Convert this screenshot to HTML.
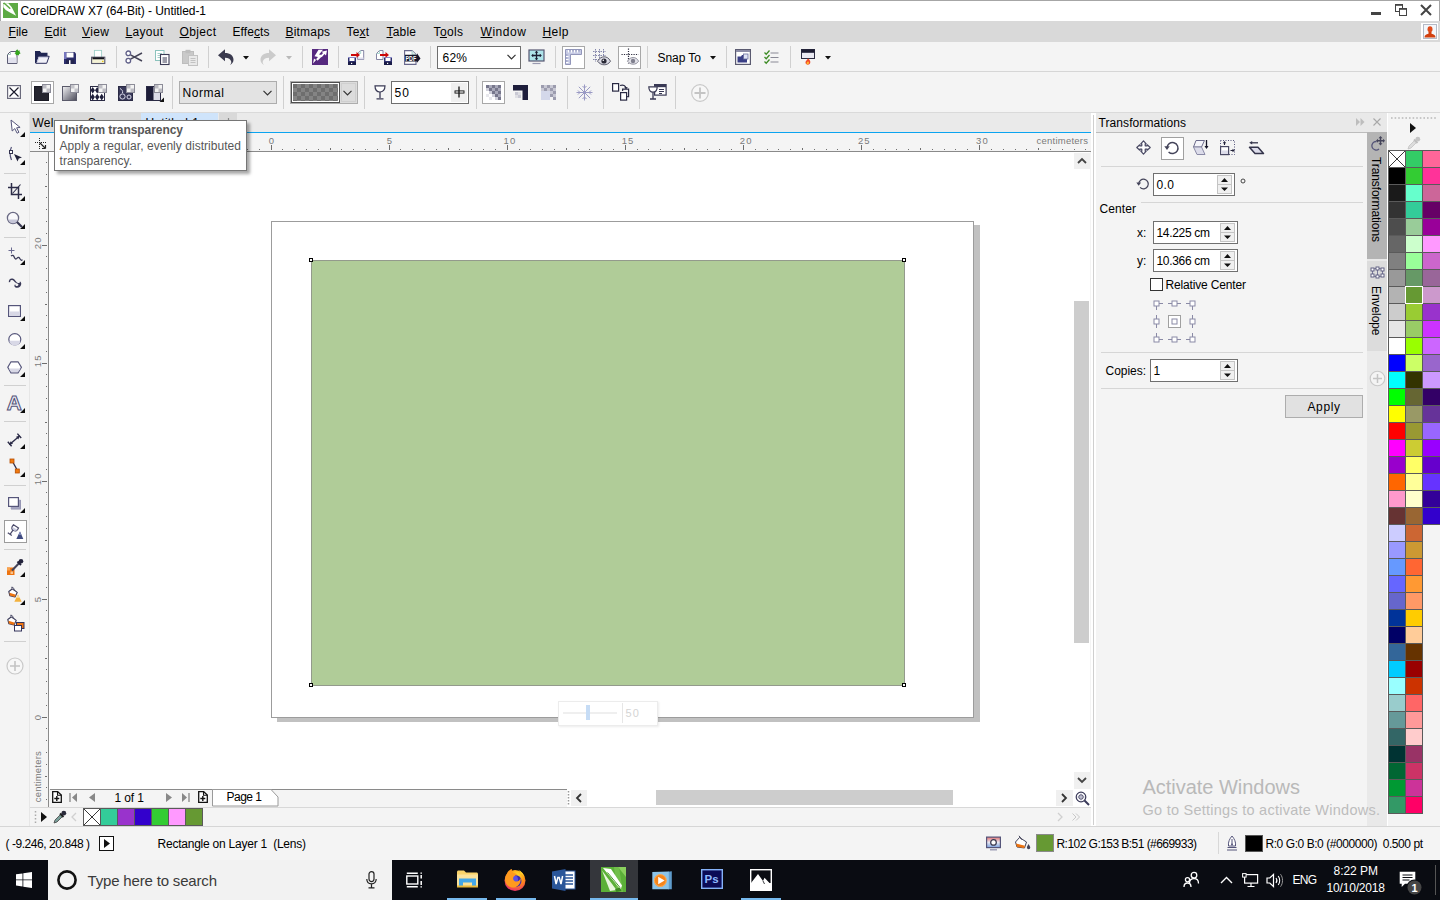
<!DOCTYPE html>
<html><head><meta charset="utf-8"><title>CorelDRAW X7 (64-Bit) - Untitled-1</title>
<style>
*{box-sizing:border-box;margin:0;padding:0}
html,body{width:1440px;height:900px;overflow:hidden;background:#f4f4f4;font-family:"Liberation Sans",sans-serif;font-size:12px;color:#000}
.a{position:absolute}
.t{position:absolute;white-space:pre;color:#000}
svg{position:absolute;overflow:visible}
.sep{position:absolute;width:1px;background:#d0d0d0}
.hl{position:absolute;height:1px;background:#d4d4d4}
.inp{position:absolute;background:#fff;border:1px solid #707070}
.spin{position:absolute;width:15px;background:#f0f0f0;border:1px solid #c4c4c4}
.sw{position:absolute;width:17px;height:17px;border:1px solid #5a5a5a;border-width:0 1px 1px 0}
u{text-decoration:underline;text-underline-offset:1px}
</style></head><body>
<!-- ===== frame regions ===== -->
<div class="a" style="left:0;top:0;width:1440px;height:21px;background:#fff;border:1px solid #a6a6a6;border-bottom:0"></div>
<div class="a" style="left:0;top:21px;width:1440px;height:21px;background:#d9d9d9"></div>
<div class="a" style="left:0;top:42px;width:1440px;height:29px;background:#f4f4f4"></div>
<div class="a" style="left:0;top:71px;width:1440px;height:1px;background:#d6d6d6"></div>
<div class="a" style="left:0;top:72px;width:1440px;height:40px;background:#f4f4f4"></div>
<div class="a" style="left:0;top:112px;width:1440px;height:1px;background:#dadada"></div>
<!-- toolbox -->
<div class="a" style="left:0;top:113px;width:30px;height:714px;background:#f4f4f4"></div>
<div class="a" style="left:29px;top:113px;width:1px;height:714px;background:#e6e6e6"></div>
<!-- tab bar -->
<div class="a" style="left:30px;top:113px;width:1061px;height:19px;background:#eaeaea"></div>
<div class="a" style="left:30px;top:113px;width:111px;height:19px;background:#d9d9d9"></div>
<div class="a" style="left:141px;top:113px;width:77px;height:19px;background:#cfe4fb"></div>
<div class="a" style="left:219px;top:113px;width:18px;height:19px;background:#d9d9d9"></div>
<div class="a" style="left:30px;top:132px;width:1061px;height:1px;background:#0ba4f0"></div>
<!-- canvas white -->
<div class="a" style="left:49px;top:152px;width:1041px;height:637px;background:#fff"></div>
<!-- rulers -->
<div class="a" style="left:30px;top:133px;width:1061px;height:19px;background:#f4f4f4;border-bottom:1px solid #8a8a8a"></div>
<div class="a" style="left:30px;top:152px;width:19px;height:655px;background:#f4f4f4;border-right:1px solid #8a8a8a"></div>
<div class="a" style="left:30px;top:133px;width:18px;height:18px;background:#f4f4f4"></div>
<!-- ===== title bar ===== -->
<svg style="left:3px;top:3px" width="15" height="15" viewBox="0 0 15 15"><rect width="15" height="15" fill="#5daa44"/><path d="M.3 4.300V1.200L1.200 .3H5.300L8.600 4l4.500 8.800L6.500 9.300Q1.800 7 .3 4.300z" fill="#fff"/><path d="M1.200 .2L6.800 5.200" stroke="#5daa44" stroke-width="1.500" stroke-linecap="round"/></svg>
<span class="t" style="left:20.5px;top:5.00px;font-size:12px;line-height:12px;letter-spacing:-0.064px;">CorelDRAW X7 (64-Bit) - Untitled-1</span>
<div class="a" style="left:1371px;top:12px;width:10px;height:3px;background:#444"></div>
<svg style="left:1395px;top:4px" width="12" height="12" viewBox="0 0 12 12"><rect x=".5" y="1" width="7" height="6.500" fill="#fff" stroke="#444" stroke-width="1"/><path d="M0 .8h8" stroke="#444" stroke-width="1.600"/><rect x="4.500" y="5" width="7" height="6.500" fill="#fff" stroke="#444" stroke-width="1"/><path d="M4 4.800h8" stroke="#444" stroke-width="1.600"/></svg>
<svg style="left:1420px;top:5px" width="12" height="10" viewBox="0 0 12 10"><path d="M1 0l10 10M11 0L1 10" stroke="#444" stroke-width="2"/></svg>
<!-- ===== menu bar ===== -->
<span class="t" style="left:8.5px;top:26.00px;font-size:12px;line-height:12px;letter-spacing:0.047px;"><u>F</u>ile</span>
<span class="t" style="left:44.5px;top:26.00px;font-size:12px;line-height:12px;letter-spacing:0.266px;"><u>E</u>dit</span>
<span class="t" style="left:82px;top:26.00px;font-size:12px;line-height:12px;letter-spacing:0.396px;"><u>V</u>iew</span>
<span class="t" style="left:125.5px;top:26.00px;font-size:12px;line-height:12px;letter-spacing:0.291px;"><u>L</u>ayout</span>
<span class="t" style="left:179.5px;top:26.00px;font-size:12px;line-height:12px;letter-spacing:0.359px;"><u>O</u>bject</span>
<span class="t" style="left:232.5px;top:26.00px;font-size:12px;line-height:12px;letter-spacing:0.086px;">Effe<u>c</u>ts</span>
<span class="t" style="left:285.5px;top:26.00px;font-size:12px;line-height:12px;letter-spacing:0.190px;"><u>B</u>itmaps</span>
<span class="t" style="left:346.5px;top:26.00px;font-size:12px;line-height:12px;letter-spacing:0.156px;">Te<u>x</u>t</span>
<span class="t" style="left:386.5px;top:26.00px;font-size:12px;line-height:12px;letter-spacing:0.203px;"><u>T</u>able</span>
<span class="t" style="left:433.5px;top:26.00px;font-size:12px;line-height:12px;letter-spacing:0.367px;">T<u>o</u>ols</span>
<span class="t" style="left:480.5px;top:26.00px;font-size:12px;line-height:12px;letter-spacing:0.562px;"><u>W</u>indow</span>
<span class="t" style="left:542.5px;top:26.00px;font-size:12px;line-height:12px;letter-spacing:0.438px;"><u>H</u>elp</span>
<div class="a" style="left:1421px;top:23px;width:17px;height:17px;background:#fff"></div><svg style="left:1423px;top:24px" width="14" height="15" viewBox="0 0 14 15"><rect x=".5" y=".5" width="13" height="14" fill="#f4f6fa" stroke="#b4bac6"/><ellipse cx="7" cy="5.300" rx="2.500" ry="3" fill="#e04a1a"/><path d="M1.500 13.500c0-2.500 1.500-3.300 4-3.800V8h3v1.700c2.500.5 4 1.300 4 3.800z" fill="#d2400f"/></svg>
<!-- ===== standard toolbar (y 42-71, cy 57) ===== -->
<!-- new -->
<svg style="left:7px;top:49px" width="15" height="15" viewBox="0 0 15 15"><path d="M3.500 2.500L.5 5.500V14.500h9.500V2.500z" fill="#fff" stroke="#5c5c74"/><path d="M1 8.500h8.500v5.500H1z" fill="#e1e1ed"/><path d="M3.500 2.500v3h-3" fill="none" stroke="#9fbdb8" stroke-width=".9"/><path d="M10.300 .3l.9 1.500 1.700-.4-.5 1.700 1.300 1.200-1.700.6-.1 1.700-1.500-.9-1.500.9 0-1.800L7.300 4.200l1.700-.6-.2-1.800z" fill="#2f9a1a"/><circle cx="10.400" cy="4" r="2.100" fill="#37a81f"/></svg>
<!-- open -->
<svg style="left:35px;top:50px" width="15" height="14" viewBox="0 0 15 14"><path d="M.6 13V1.600h4l1.300 1.800h6V6" fill="#1f2552" stroke="#1f2552" stroke-width="1.200"/><path d="M.8 13.300L3.300 6.300h10.900l-2.500 7z" fill="#f1f1f8" stroke="#2a2c5a" stroke-width="1"/><path d="M2.200 12.300l1.800-5h9" stroke="#c9cbe2" fill="none"/></svg>
<!-- save -->
<svg style="left:64px;top:52px" width="12" height="12" viewBox="0 0 12 12"><path d="M0 0h10.500L12 1.500V12H0z" fill="#2c2e6c"/><path d="M0 0h2.500v7H0z" fill="#7676be"/><rect x="2.500" y=".5" width="7" height="5" fill="#fff"/><rect x="2" y="7.500" width="8.500" height="4.500" fill="#23244f"/><rect x="5" y="8.200" width="1.500" height="3.800" fill="#fff"/></svg>
<!-- print -->
<svg style="left:91px;top:50px" width="15" height="14" viewBox="0 0 15 14"><rect x="3.400" y=".4" width="7.200" height="7.500" fill="#fff" stroke="#9fcfc8" stroke-width=".9"/><rect x=".6" y="7.200" width="13.200" height="6.300" fill="#f4f2d6" stroke="#55556a" stroke-width="1.100"/><rect x="1.500" y="7.300" width="11.500" height="2" fill="#15151f"/><rect x="11" y="10.800" width="1.500" height="1.200" fill="#e9c614"/></svg>
<div class="sep" style="left:116px;top:46px;height:22px"></div>
<!-- cut -->
<svg style="left:125px;top:50px" width="18" height="14" viewBox="0 0 18 14"><path d="M5.500 4.800L17 11M5.500 9.200L17 3" stroke="#444357" stroke-width="1.500"/><circle cx="3.300" cy="3.300" r="2.300" fill="#fff" stroke="#5f5f88" stroke-width="1.300"/><circle cx="3.300" cy="10.700" r="2.300" fill="#fff" stroke="#5f5f88" stroke-width="1.300"/></svg>
<!-- copy -->
<svg style="left:155px;top:50px" width="15" height="15" viewBox="0 0 15 15"><rect x=".5" y=".5" width="8.500" height="10" fill="#fff" stroke="#8cc3bd"/><path d="M2.500 3.500h4.500M2.500 5.500h4.500M2.500 7.500h2.500" stroke="#a6d0cb"/><rect x="5.500" y="4.500" width="8.500" height="10" fill="#fff" stroke="#3b3b55" stroke-width="1.100"/><path d="M7.500 8h4.500M7.500 10h4.500M7.500 12h4.500" stroke="#3b3b55"/></svg>
<!-- paste (disabled) -->
<svg style="left:182px;top:49px" width="16" height="17" viewBox="0 0 16 17"><rect x=".5" y="2.500" width="11" height="12" fill="#c9c9c9" stroke="#bdbdbd"/><rect x="3.500" y=".8" width="5" height="3.400" fill="#bdbdbd"/><rect x="6.500" y="6.500" width="9" height="10" fill="#e9e9e9" stroke="#c2c2c2"/><path d="M8.500 9.500h5M8.500 11.500h5M8.500 13.500h5" stroke="#c2c2c2"/></svg>
<div class="sep" style="left:208px;top:46px;height:22px"></div>
<!-- undo -->
<svg style="left:217px;top:48px" width="18" height="18" viewBox="0 0 18 18"><path d="M1 7.200L8 1.200V5c5 0 8.500 2.500 8.500 6.800 0 2.300-1.400 4.200-3.400 5.200 1-1.200 1.300-2.300 1.100-3.500C13.700 11 11.500 9.800 8 9.700v3.600z" fill="#3a3a4e"/></svg>
<svg style="left:242.500px;top:56px" width="6" height="3.500" viewBox="0 0 6 3.500"><path d="M0 0h6L3 3.500z" fill="#111"/></svg>
<!-- redo disabled -->
<svg style="left:259px;top:48px" width="18" height="18" viewBox="0 0 18 18"><path d="M17 7.200L10 1.200V5C5 5 1.500 7.500 1.500 11.800c0 2.300 1.400 4.200 3.400 5.200-1-1.200-1.300-2.300-1.100-3.500C4.300 11 6.500 9.800 10 9.700v3.600z" fill="#cbcbcb"/></svg>
<svg style="left:285.500px;top:56px" width="6" height="3.500" viewBox="0 0 6 3.500"><path d="M0 0h6L3 3.500z" fill="#b9b9b9"/></svg>
<div class="sep" style="left:302px;top:46px;height:22px"></div>
<!-- purple search/connect icon -->
<svg style="left:312px;top:49px" width="16" height="16" viewBox="0 0 16 16"><rect width="16" height="16" fill="#56297f"/><path d="M6.500 .8h4.500L7 5.500l4 .8-5.500 5.500-.8-1.600L1 14.500l1-5 1.600 1.300L6 8 2.500 7.200z" fill="#fff"/><path d="M15 1.500l-1 5-1.500-1.400-2.800 3.200-1.800-1 3.200-3.300-1.600-1.300z" fill="#fff"/></svg>
<div class="sep" style="left:338px;top:46px;height:22px"></div>
<!-- import -->
<svg style="left:348px;top:50px" width="16" height="15" viewBox="0 0 16 15"><path d="M9.700 3.500L12.700 .5h3v9h-6z" fill="#fff" stroke="#77779a" stroke-width=".9"/><path d="M12.700 .5v3h-3" fill="none" stroke="#9fd0c8" stroke-width=".9"/><path d="M10 7.500h5.500v1.800H10z" fill="#dedeed"/><rect x="0" y="7" width="8" height="8" fill="#2c2e6c"/><rect x="0" y="7" width="8" height="1" fill="#8a8ac8"/><rect x="1.5" y="8" width="5" height="3" fill="#fff"/><rect x="0" y="12" width="8" height="3" fill="#1a1c48"/><rect x="3" y="12.8" width="1.200" height="1.200" fill="#fff"/><path d="M3 4h5.500V2l3.500 2.900-3.500 2.900V5.900H3z" fill="#cc0808"/></svg>
<!-- export -->
<svg style="left:376px;top:50px" width="16" height="15" viewBox="0 0 16 15"><path d="M.5 3.500L3.500 .5h3.500v9H.5z" fill="#fff" stroke="#77779a" stroke-width=".9"/><path d="M3.500 .5v3h-3" fill="none" stroke="#9fd0c8" stroke-width=".9"/><rect x="8" y="7" width="8" height="8" fill="#2c2e6c"/><rect x="8" y="7" width="8" height="1" fill="#8a8ac8"/><rect x="9.5" y="8" width="5" height="3" fill="#fff"/><rect x="8" y="12" width="8" height="3" fill="#1a1c48"/><rect x="11" y="12.8" width="1.200" height="1.200" fill="#fff"/><path d="M4 4h5.500V2l3.500 2.900-3.500 2.900V5.900H4z" fill="#cc0808"/></svg>
<!-- pdf -->
<svg style="left:404px;top:50px" width="17" height="15" viewBox="0 0 17 15"><path d="M.6 .6H8l4 4v9.800H.6z" fill="#fff" stroke="#66668a" stroke-width="1.100"/><path d="M8 .6v4h4" fill="#d8ece8" stroke="#9fc8c0" stroke-width=".8"/><path d="M1 4.800h12V3.300l3.500 5.200L13 12.800V11.500H1z" fill="#16162a"/><text x="1.600" y="10.600" font-family="Liberation Sans" font-weight="bold" font-size="6.300" fill="#fff" textLength="10.500" lengthAdjust="spacingAndGlyphs">PDF</text></svg>
<div class="sep" style="left:430px;top:46px;height:22px"></div>
<!-- zoom combo -->
<div class="inp" style="left:437px;top:46px;width:84px;height:23px;border-color:#6f6f6f"></div>
<span class="t" style="left:442.5px;top:52.00px;font-size:12px;line-height:12px;letter-spacing:0.234px;">62%</span>
<svg style="left:507px;top:54px" width="9" height="6" viewBox="0 0 9 6"><path d="M.5 .8l4 4 4-4" fill="none" stroke="#333" stroke-width="1.200"/></svg>
<!-- full page -->
<svg style="left:528px;top:49px" width="17" height="16" viewBox="0 0 17 16"><rect x="1" y="1" width="15" height="11" fill="#aee4ea" stroke="#555570" stroke-width="1.200"/><path d="M8.500 2.500v8M4 6.500h9" stroke="#1d1d33" stroke-width="1.300"/><path d="M8.500 1.800l1.800 2h-3.600zM8.500 11.200l1.800-2h-3.600zM3.200 6.500l2-1.800v3.600zM13.800 6.500l-2-1.800v3.600z" fill="#1d1d33"/><path d="M4.500 14.500h8" stroke="#9a9ab0" stroke-width="1.200"/></svg>
<div class="sep" style="left:555px;top:46px;height:22px"></div>
<!-- rulers (toggled) -->
<div class="a" style="left:562px;top:46px;width:23px;height:23px;background:#fff;border:1px solid #a8a8a8"></div>
<svg style="left:565px;top:49px" width="17" height="16" viewBox="0 0 17 16"><path d="M.5 .5h16v5H5.500v10H.5z" fill="#c6cae4" stroke="#9296ba"/><path d="M3.500 1v2.500M6.500 1v2.500M9.500 1v2.500M12.500 1v2.500M1 7.500h2.500M1 10.500h2.500M1 13.500h2.500" stroke="#fff" stroke-width="1.200"/><path d="M5 1v1.500M8 1v1.500M11 1v1.500M14 1v1.500M1 6h1.500M1 9h1.500M1 12h1.500" stroke="#7a7ea6" stroke-width=".8"/></svg>
<!-- grid eye -->
<svg style="left:592px;top:48px" width="19" height="18" viewBox="0 0 19 18"><path d="M1 3.500h13M1 7.500h13M1 11.500h6M3.500 1v13M7.500 1v10M11.500 1v7" stroke="#8486ab" stroke-width="1" stroke-dasharray="1.500 1"/><path d="M5.500 13.200c2-3.300 4.500-4.400 6.700-4.400s4.700 1.100 6.300 4.400c-1.600 2.600-4 3.600-6.300 3.600s-4.700-1-6.700-3.600z" fill="#dcdce6" stroke="#3a3a4a" stroke-width=".8"/><circle cx="12" cy="13" r="2.600" fill="#2a2a36"/><circle cx="11.300" cy="12.200" r=".8" fill="#fff"/></svg>
<!-- guides eye (toggled) -->
<div class="a" style="left:618px;top:46px;width:23px;height:23px;background:#fff;border:1px solid #a8a8a8"></div>
<svg style="left:621px;top:48px" width="19" height="18" viewBox="0 0 19 18"><path d="M7.500 .5v15M.5 6.500h17" stroke="#2a2a3c" stroke-width="1.200" stroke-dasharray="1.200 1.200"/><path d="M6.500 13.200c1.700-2.800 3.800-3.700 5.700-3.700s4 .9 5.400 3.700c-1.400 2.200-3.400 3-5.400 3s-4-.8-5.700-3z" fill="#e3e3ea" stroke="#7a7a88" stroke-width=".8"/><circle cx="12" cy="13" r="2.200" fill="#80808e"/></svg>
<div class="sep" style="left:647px;top:46px;height:22px"></div>
<span class="t" style="left:657.5px;top:52.00px;font-size:12px;line-height:12px;letter-spacing:-0.055px;">Snap To</span>
<svg style="left:709.500px;top:56px" width="6" height="3.500" viewBox="0 0 6 3.500"><path d="M0 0h6L3 3.500z" fill="#111"/></svg>
<div class="sep" style="left:726px;top:46px;height:22px"></div>
<!-- options -->
<svg style="left:735px;top:49px" width="16" height="16" viewBox="0 0 16 16"><rect x=".6" y=".6" width="14.800" height="14.800" fill="#fff" stroke="#5a5a70" stroke-width="1.200"/><rect x="1" y="1" width="14" height="2" fill="#8c8ca6"/><path d="M2.500 13.500V7.500h3.500l1-1.500h5v7.500z" fill="#3a3f86"/><rect x="8.500" y="5" width="4.500" height="5" fill="#dfe3f5" stroke="#6a6f9c" stroke-width=".8"/></svg>
<!-- checklist -->
<svg style="left:763px;top:49px" width="17" height="17" viewBox="0 0 17 17"><path d="M7.500 4h8M7.500 8.500h8M7.500 13h8" stroke="#8a8a96" stroke-width="1.100"/><path d="M1.500 3.500l1.700 1.700L6.500 1.500M1.500 8l1.700 1.700L6.500 6M1.500 12.500l1.700 1.700 3.300-3.700" fill="none" stroke="#3d8b24" stroke-width="1.300"/></svg>
<div class="sep" style="left:790px;top:46px;height:22px"></div>
<!-- app launcher -->
<svg style="left:801px;top:49px" width="14" height="17" viewBox="0 0 14 17"><rect x=".5" y=".5" width="13" height="9" fill="#e9e9f2" stroke="#2a2a40" stroke-width="1"/><rect x=".5" y=".5" width="13" height="3.300" fill="#1d1d33"/><path d="M7 9.500c2 1.400 2.700 2.900 2.200 4.500-.4 1.100-1.300 1.700-2.300 1.700-1.400 0-2.400-.9-2.400-2.200 0-1.300 1.200-2 2.500-4z" fill="#f0482a"/><path d="M7 12.300c.9.700 1.200 1.500.9 2.300-.2.500-.7.800-1.200.8-.7 0-1.200-.5-1.200-1.100 0-.7.800-1.100 1.500-2z" fill="#ffb62e"/></svg>
<svg style="left:824.500px;top:56px" width="6" height="3.500" viewBox="0 0 6 3.500"><path d="M0 0h6L3 3.500z" fill="#111"/></svg>
<!-- ===== property bar (y 72-111, cy 92) ===== -->

<!-- no transparency -->
<svg style="left:7px;top:85px" width="14" height="14" viewBox="0 0 14 14"><rect x=".6" y=".6" width="12.800" height="12.800" fill="#fff" stroke="#6a6a7c" stroke-width="1.200"/><path d="M2.500 2.500l9 9M11.500 2.500l-9 9" stroke="#1c1c2c" stroke-width="1.200"/></svg>
<!-- uniform (selected) -->
<div class="a" style="left:31px;top:81px;width:23px;height:23px;background:#fff;border:1px solid #a8a8a8"></div>
<svg style="left:34px;top:84px" width="17" height="17" viewBox="0 0 17 17"><rect x=".5" y="2.500" width="14" height="14" fill="#24242e" stroke="#1a1a24"/><rect x="8.500" y=".5" width="8" height="8" fill="#f2f2f2" stroke="#8c8c98"/><rect x="9" y="1" width="3.500" height="3.500" fill="#bdbdc4"/><rect x="12.500" y="4.500" width="3.500" height="3.500" fill="#bdbdc4"/></svg>
<!-- fountain -->
<svg style="left:62px;top:84px" width="17" height="17" viewBox="0 0 17 17"><defs><linearGradient id="fg1" x1="0" y1="0" x2="1" y2="1"><stop offset="0" stop-color="#f4f4f6"/><stop offset="1" stop-color="#4a4a58"/></linearGradient></defs><rect x=".5" y="2.500" width="14" height="14" fill="url(#fg1)" stroke="#5a5a6a"/><rect x="8.500" y=".5" width="8" height="8" fill="#f2f2f2" stroke="#8c8c98"/><rect x="9" y="1" width="3.500" height="3.500" fill="#c4c4ca"/><rect x="12.500" y="4.500" width="3.500" height="3.500" fill="#c4c4ca"/></svg>
<!-- vector pattern -->
<svg style="left:90px;top:84px" width="17" height="17" viewBox="0 0 17 17"><rect x=".5" y="2.500" width="14" height="14" fill="#fff" stroke="#2a2a44"/><path d="M2.700 3l2.200 3.300-2.200 3.300L.5 6.300zM7.200 3l2.200 3.300-2.200 3.300L5 6.300zM2.700 9.800l2.200 3.300-2.200 3.300L.5 13.100zM7.200 9.800l2.200 3.300-2.200 3.300L5 13.100zM11.700 9.800l2.200 3.300-2.200 3.300-2.200-3.300z" fill="#20203c"/><rect x="8.500" y=".5" width="8" height="8" fill="#f2f2f2" stroke="#8c8c98"/><rect x="9" y="1" width="3.500" height="3.500" fill="#bdbdc4"/><rect x="12.500" y="4.500" width="3.500" height="3.500" fill="#bdbdc4"/></svg>
<!-- bitmap pattern -->
<svg style="left:118px;top:84px" width="17" height="17" viewBox="0 0 17 17"><rect x=".5" y="2.500" width="14" height="14" fill="#3a3a5a" stroke="#2a2a44"/><circle cx="4.500" cy="12.500" r="2.600" fill="none" stroke="#d8d8e8" stroke-width="1"/><circle cx="11" cy="13" r="2" fill="none" stroke="#d8d8e8" stroke-width="1"/><path d="M2 4.500c2 1 3 2.500 2.500 4.500" fill="none" stroke="#d8d8e8" stroke-width="1"/><rect x="8.500" y=".5" width="8" height="8" fill="#f2f2f2" stroke="#8c8c98"/><rect x="9" y="1" width="3.500" height="3.500" fill="#bdbdc4"/><rect x="12.500" y="4.500" width="3.500" height="3.500" fill="#bdbdc4"/></svg>
<!-- two-color pattern w/ flyout -->
<svg style="left:146px;top:84px" width="19" height="19" viewBox="0 0 19 19"><rect x=".5" y="2.500" width="14" height="14" fill="#dcdce8" stroke="#2a2a44"/><rect x="1" y="3" width="6.500" height="13" fill="#1c1c38"/><rect x="8.500" y=".5" width="8" height="8" fill="#f2f2f2" stroke="#8c8c98"/><rect x="9" y="1" width="3.500" height="3.500" fill="#bdbdc4"/><rect x="12.500" y="4.500" width="3.500" height="3.500" fill="#bdbdc4"/><path d="M18 13.500V18h-4.500z" fill="#111"/></svg>
<div class="sep" style="left:172px;top:76px;height:33px"></div>
<!-- Normal dropdown -->
<div class="a" style="left:179px;top:81px;width:98px;height:23px;background:#e3e3e3;border:1px solid #adadad"></div>
<span class="t" style="left:182.5px;top:87.00px;font-size:12px;line-height:12px;letter-spacing:0.566px;">Normal</span>
<svg style="left:263px;top:90px" width="9" height="6" viewBox="0 0 9 6"><path d="M.5 .8l4 4 4-4" fill="none" stroke="#333" stroke-width="1.200"/></svg>
<div class="sep" style="left:283px;top:76px;height:33px"></div>
<!-- transparency picker -->
<div class="a" style="left:290px;top:81px;width:68px;height:23px;background:#dcdcdc;border:1px solid #adadad"></div>
<svg style="left:291px;top:82px" width="49" height="21" viewBox="0 0 49 21"><defs><pattern id="chk" x="2" y="2" width="8" height="8" patternUnits="userSpaceOnUse"><rect width="8" height="8" fill="#848484"/><rect width="4" height="4" fill="#6e6e6e"/><rect x="4" y="4" width="4" height="4" fill="#6e6e6e"/></pattern></defs><rect x="0" y="0" width="49" height="21" fill="#4f4f4f"/><rect x="1" y="1" width="47" height="19" fill="#fff"/><rect x="2" y="2" width="45" height="17" fill="url(#chk)"/></svg>
<div class="a" style="left:341px;top:83px;width:15px;height:19px;background:#dcdcdc;border:1px solid #cfcfcf"></div>
<svg style="left:343px;top:90px" width="9" height="6" viewBox="0 0 9 6"><path d="M.5 .8l4 4 4-4" fill="none" stroke="#333" stroke-width="1.200"/></svg>
<div class="sep" style="left:364px;top:76px;height:33px"></div>
<!-- glass icon -->
<svg style="left:374px;top:85px" width="12" height="15" viewBox="0 0 12 15"><path d="M1 .8h10c0 4-2 6.200-5 6.200S1 4.800 1 .8z" fill="#fff" stroke="#3a3a55" stroke-width="1.200"/><path d="M6 7v6M2.500 13.800h7" stroke="#3a3a55" stroke-width="1.300"/></svg>
<!-- 50 input -->
<div class="inp" style="left:391px;top:81px;width:78px;height:23px;border-color:#6f6f6f"></div>
<span class="t" style="left:394.5px;top:87.00px;font-size:12px;line-height:12px;letter-spacing:1.141px;">50</span>
<div class="a" style="left:451px;top:83px;width:16px;height:19px;background:#f0f0f0"></div>
<svg style="left:454px;top:86px" width="11" height="12" viewBox="0 0 11 12"><rect x="1" y="4.900" width="9" height="2.200" fill="#f0f0f0" stroke="#111" stroke-width=".9"/><path d="M5 .5v11" stroke="#111" stroke-width="1.300"/></svg>
<div class="sep" style="left:476px;top:76px;height:33px"></div>
<!-- transparency target: all (selected) -->
<div class="a" style="left:482px;top:81px;width:23px;height:23px;background:#fff;border:1px solid #a8a8a8"></div>
<svg style="left:486px;top:85px" width="15" height="15" viewBox="0 0 15 15"><g fill="#77778c"><rect x="0" y="0" width="3" height="3"/><rect x="6" y="0" width="3" height="3"/><rect x="12" y="0" width="3" height="3"/><rect x="3" y="3" width="3" height="3"/><rect x="9" y="3" width="3" height="3"/><rect x="6" y="6" width="3" height="3"/><rect x="12" y="6" width="3" height="3"/><rect x="9" y="9" width="3" height="3"/><rect x="12" y="12" width="3" height="3"/></g><g fill="#a9a9ba"><rect x="3" y="0" width="3" height="3"/><rect x="9" y="0" width="3" height="3"/><rect x="6" y="3" width="3" height="3"/><rect x="12" y="3" width="3" height="3"/><rect x="9" y="6" width="3" height="3"/><rect x="12" y="9" width="3" height="3"/></g><g fill="#cfcfda"><rect x="0" y="3" width="3" height="3"/><rect x="3" y="6" width="3" height="3"/><rect x="6" y="9" width="3" height="3"/><rect x="9" y="12" width="3" height="3"/><rect x="0" y="9" width="3" height="3" opacity=".5"/><rect x="3" y="12" width="3" height="3" opacity=".5"/></g></svg>
<!-- fill only -->
<svg style="left:513px;top:85px" width="16" height="16" viewBox="0 0 16 16"><path d="M0 0h15v15h-5.500V5.500H0z" fill="#1e1e3c"/><g fill="#c9c9d4"><rect x="2" y="7" width="3" height="3"/><rect x="5" y="10" width="3" height="3"/><rect x="2" y="10" width="3" height="3" opacity=".5"/><rect x="5" y="7" width="3" height="3" opacity=".5"/></g></svg>
<!-- outline only -->
<svg style="left:541px;top:85px" width="16" height="16" viewBox="0 0 16 16"><g fill="#9c9cae"><rect x="0" y="0" width="3" height="3"/><rect x="6" y="0" width="3" height="3"/><rect x="12" y="0" width="3" height="3"/><rect x="3" y="3" width="3" height="3"/><rect x="9" y="3" width="3" height="3"/><rect x="12" y="6" width="3" height="3"/><rect x="9" y="9" width="3" height="3"/><rect x="12" y="12" width="3" height="3"/></g><g fill="#c8c8d4"><rect x="3" y="0" width="3" height="3"/><rect x="9" y="0" width="3" height="3"/><rect x="0" y="3" width="3" height="3"/><rect x="6" y="3" width="3" height="3"/><rect x="12" y="3" width="3" height="3"/><rect x="9" y="6" width="3" height="3"/><rect x="12" y="9" width="3" height="3"/></g><rect x="0" y="6" width="9" height="9" fill="#d4d8ea"/></svg>
<div class="sep" style="left:567px;top:76px;height:33px"></div>
<!-- freeze -->
<svg style="left:576px;top:84px" width="17" height="17" viewBox="0 0 17 17"><g stroke="#9a9ac4" stroke-width="1" fill="none"><path d="M8.500 .5v16M.5 8.500h16M2.800 2.800l11.400 11.400M14.200 2.800L2.800 14.200"/><path d="M6.500 2l2 2 2-2M6.500 15l2-2 2 2M2 6.500l2 2-2 2M15 6.500l-2 2 2 2"/></g></svg>
<div class="sep" style="left:603px;top:76px;height:33px"></div>
<!-- copy transparency -->
<svg style="left:612px;top:83px" width="18" height="19" viewBox="0 0 18 19"><rect x=".6" y=".6" width="6" height="7.500" fill="#fff" stroke="#2a2a44" stroke-width="1.200"/><rect x="8.600" y="9.600" width="6" height="7.500" fill="#fff" stroke="#2a2a44" stroke-width="1.200"/><path d="M10.600 8V6.200h6v7.500h-1.500" fill="none" stroke="#2a2a44" stroke-width="1.200"/><path d="M8 2.500c3.500-1 5.500 0 6 2.800" fill="none" stroke="#2a2a44" stroke-width="1.200"/><path d="M12.200 4.300l1.900 2 1.700-2.300z" fill="#2a2a44"/></svg>
<div class="sep" style="left:639px;top:76px;height:33px"></div>
<!-- edit transparency -->
<svg style="left:648px;top:84px" width="19" height="17" viewBox="0 0 19 17"><rect x="6.600" y=".6" width="11.500" height="10.500" fill="#fff" stroke="#3a3a55" stroke-width="1.200"/><rect x="7" y="1" width="11" height="2.200" fill="#3a3a55"/><path d="M11 5.500h5M11 7.500h5M11 9.500h3" stroke="#3a3a55" stroke-width="1"/><path d="M.8 2.800h8.400c0 3.500-1.700 5.400-4.200 5.400S.8 6.300.8 2.800z" fill="#fff" stroke="#3a3a55" stroke-width="1.200"/><path d="M5 8.200v6M2 15h6" stroke="#3a3a55" stroke-width="1.300"/></svg>
<div class="sep" style="left:675px;top:76px;height:33px"></div>
<!-- quick customize -->
<svg style="left:690px;top:82.500px" width="20" height="20" viewBox="0 0 20 20"><circle cx="10" cy="10" r="8.300" fill="#f7f7f7" stroke="#c9c9c9" stroke-width="1.200"/><path d="M10 4.500v11M4.500 10h11" stroke="#c4c4c4" stroke-width="1.800"/></svg>
<!-- ===== toolbox (x 0-29, cx 15) ===== -->
<svg style="left:0;top:0" width="30" height="700" viewBox="0 0 30 700"><path d="M25 132V137H20zM25 160V165H20zM25 196V201H20zM25 224V229H20zM25 260V265H20zM25 316V321H20zM25 344V349H20zM25 372V377H20zM25 408V413H20zM25 444V449H20zM25 472V477H20zM25 508V513H20zM25 572V577H20zM25 600V605H20z" fill="#0c0c0c"/></svg>
<!-- pick -->
<svg style="left:10px;top:119px" width="16" height="18" viewBox="0 0 16 18"><path d="M1 1l1.200 11 2.600-2.400 2.300 4.600 1.800-.9-2.300-4.500 3.500-.4z" fill="#fff" stroke="#55557a" stroke-width="1"/></svg>
<!-- shape -->
<svg style="left:8px;top:146px" width="18" height="18" viewBox="0 0 18 18"><path d="M3.500 1c-2 4-2 8 0 13" fill="none" stroke="#55557a" stroke-width="1.200"/><rect x="1.500" y="4.500" width="3" height="3" fill="#fff" stroke="#33334f"/><path d="M6 8l8 3.500-3.200 1-1.300 3z" fill="#22223a"/></svg>
<div class="hl" style="left:4px;top:173px;width:22px;background:#d0d0d0"></div>
<!-- crop -->
<svg style="left:8px;top:183px" width="14" height="16" viewBox="0 0 14 16"><path d="M3.500 0v11.500H14M0 4.500h10.500V16" fill="none" stroke="#2c2c48" stroke-width="1.500"/><path d="M12.500 1.500L4.500 10.500" stroke="#2c2c48" stroke-width="1.100"/></svg>
<!-- zoom -->
<svg style="left:6px;top:211px" width="20" height="19" viewBox="0 0 20 19"><circle cx="7" cy="7" r="5.600" fill="#f8f8fb" stroke="#6a6a84" stroke-width="1.300"/><path d="M2.500 8.500h9a4.600 4.600 0 0 1-9 0z" fill="#c6c6d8"/><path d="M11 11l5 5" stroke="#3a3a55" stroke-width="2.200"/></svg>
<div class="hl" style="left:4px;top:237px;width:22px;background:#d0d0d0"></div>
<!-- freehand -->
<svg style="left:7px;top:247px" width="18" height="18" viewBox="0 0 18 18"><path d="M4.500 .5v6M1.500 3.500h6" stroke="#6a6a90" stroke-width="1"/><path d="M4 9c1.500-1.300 2.600-.6 3.300 1.200s1.600 2.400 2.800 1 2-.8 3 .8 1.500 1.500 2.400.6" fill="none" stroke="#3a3a58" stroke-width="1.300"/></svg>
<!-- artistic media -->
<svg style="left:8px;top:277px" width="15" height="14" viewBox="0 0 15 14"><path d="M.8 5.200C.5 2.300 3 .6 5.300 1.800c2.600 1.400 2.800 4 5 4.300 1.200.1 2-.7 1.500-1.800 1.800.8 2 3.600.4 5.300-1.500 1.500-4 1.600-5.300.3-.8-.9-.6-2.200.4-2.700-.2 1.300.8 2.200 2 1.800 1.300-.5 1.500-1.800.5-2.300-2.800-.3-3.600-2.800-5.500-3.600-1.300-.5-2.400.4-2 2z" fill="#3a3a58"/></svg>
<!-- rectangle -->
<svg style="left:8px;top:305px" width="18" height="17" viewBox="0 0 18 17"><rect x=".6" y=".6" width="11.800" height="10.800" fill="#fff" stroke="#55557a" stroke-width="1.200"/><rect x="1.200" y="6.500" width="10.600" height="4.300" fill="#d8d8e6"/></svg>
<!-- ellipse -->
<svg style="left:8px;top:333px" width="18" height="17" viewBox="0 0 18 17"><ellipse cx="6.800" cy="6.300" rx="6" ry="5.600" fill="#fff" stroke="#55557a" stroke-width="1.200"/><path d="M1.300 7.800h11a5.500 5 0 0 1-11 0z" fill="#d8d8e6"/></svg>
<!-- polygon -->
<svg style="left:7px;top:361px" width="19" height="17" viewBox="0 0 19 17"><path d="M4 .8h7l3.400 5.500-3.400 5.500H4L.8 6.300z" fill="#fff" stroke="#55557a" stroke-width="1.200"/><path d="M1.800 7.500h11.800l-2.800 3.700H4.200z" fill="#d8d8e6"/></svg>
<div class="hl" style="left:4px;top:385px;width:22px;background:#d0d0d0"></div>
<!-- text -->
<svg style="left:7px;top:395px" width="16" height="17" viewBox="0 0 16 17"><text x="-.3" y="15" font-family="Liberation Sans" font-weight="bold" font-size="19.500" fill="#f1f1f7" stroke="#55557a" stroke-width="1" textLength="15" lengthAdjust="spacingAndGlyphs">A</text></svg>
<div class="hl" style="left:4px;top:421px;width:22px;background:#d0d0d0"></div>
<!-- dimension -->
<svg style="left:7px;top:432px" width="17" height="17" viewBox="0 0 17 17"><path d="M2.500 12.500L12.500 4" stroke="#2c2c48" stroke-width="1.400"/><path d="M.8 9.800l3.800 4.400M10.400 1.600l3.800 4.400" stroke="#2c2c48" stroke-width="1.400"/><path d="M2 13l4-1.200-2.300-2.600zM13 3.600l-4 1.200 2.300 2.600z" fill="#2c2c48"/></svg>
<!-- connector -->
<svg style="left:9px;top:458px" width="17" height="20" viewBox="0 0 17 20"><path d="M3.500 3.500l5.500 10" stroke="#2c2c48" stroke-width="1.300"/><rect x="1" y="1" width="4" height="4" fill="#f07a10" stroke="#b84e00" stroke-width=".8"/><rect x="6.300" y="11" width="4" height="4" fill="#f07a10" stroke="#b84e00" stroke-width=".8"/></svg>
<div class="hl" style="left:4px;top:485px;width:22px;background:#d0d0d0"></div>
<!-- drop shadow -->
<svg style="left:8px;top:497px" width="18" height="17" viewBox="0 0 18 17"><rect x="3" y="3" width="10" height="9.500" fill="#8d8dae"/><rect x="2.400" y="2.400" width="10" height="9.500" fill="#b3b3c8" opacity=".6"/><rect x=".6" y=".6" width="9.800" height="8.800" fill="#fff" stroke="#55557a" stroke-width="1.200"/></svg>
<!-- transparency (selected) -->
<div class="a" style="left:4px;top:520px;width:23px;height:23px;background:#fff;border:1px solid #9c9c9c"></div>
<svg style="left:7px;top:523px" width="18" height="17" viewBox="0 0 18 17"><path d="M6.500 1.800l5 3.200c-1 2.600-3 3.500-5 2.500S4 4.200 6.500 1.800z" fill="#fff" stroke="#4a4a6a" stroke-width="1.200"/><path d="M5.800 4.200l4.700 2.600c-1 1-2.500 1.200-3.700.6S5.300 5.600 5.800 4.200z" fill="#c9cbe0"/><path d="M6 7.200L3 11.300M.8 9.800l4 2.800" stroke="#4a4a6a" stroke-width="1.200"/><path d="M13 8.500l3.300 7.500h-7z" fill="#3f4a80"/><path d="M13 8.500l1.500 3.500h-3.200z" fill="#7c86b4"/></svg>
<div class="hl" style="left:4px;top:549px;width:22px;background:#d0d0d0"></div>
<!-- color eyedropper -->
<svg style="left:6px;top:558px" width="20" height="19" viewBox="0 0 20 19"><rect x="1" y="9.500" width="7.500" height="7.500" fill="#ee7410"/><rect x="1" y="9.500" width="3" height="3" fill="#f8a24e"/><rect x="4.500" y="13.500" width="2.500" height="2.500" fill="#f8c48e"/><path d="M6 12.500L13 5.200" stroke="#44445a" stroke-width="2"/><path d="M11.500 3.500l3.500 3.500" stroke="#22223a" stroke-width="2"/><circle cx="15" cy="3.300" r="2.300" fill="#22223a"/></svg>
<!-- interactive fill -->
<svg style="left:8px;top:586px" width="17" height="18" viewBox="0 0 17 18"><path d="M4.500 2.800l4.700 3.600-2.200 4.500-5.200-1.300L.8 5.500z" fill="#fff" stroke="#3a3a58" stroke-width="1.100" stroke-linejoin="round"/><path d="M1.600 6.800l6.300 2-1.200 2.100-4.900-1.300z" fill="#ee7410"/><path d="M3.600 .8l2.600 3.400" stroke="#3a3a58" stroke-width="1.100"/><circle cx="4.900" cy="2.600" r=".9" fill="#fff" stroke="#3a3a58" stroke-width=".7"/><path d="M10 8.500l3.700 7.300H6.300z" fill="#f3b23e"/><path d="M10 8.500l1.700 3.300H8.300z" fill="#fbe0a4"/></svg>
<!-- smart fill -->
<svg style="left:7px;top:614px" width="19" height="18" viewBox="0 0 19 18"><path d="M4.500 2.800l4.700 3.600-2.200 4.500-5.200-1.300L.8 5.500z" fill="#fff" stroke="#3a3a58" stroke-width="1.100" stroke-linejoin="round"/><path d="M1.600 6.800l6.300 2-1.200 2.100-4.900-1.300z" fill="#ee7410"/><path d="M3.600 .8l2.600 3.400" stroke="#3a3a58" stroke-width="1.100"/><circle cx="4.900" cy="2.600" r=".9" fill="#fff" stroke="#3a3a58" stroke-width=".7"/><rect x="9.500" y="8.500" width="7.500" height="6" fill="#ee7410" stroke="#33335a" stroke-width="1"/><rect x="7.500" y="11.500" width="7" height="5.500" fill="#fff" stroke="#33335a" stroke-width="1"/></svg>
<div class="hl" style="left:4px;top:641px;width:22px;background:#d0d0d0"></div>
<svg style="left:6px;top:657px" width="18" height="18" viewBox="0 0 18 18"><circle cx="9" cy="9" r="8" fill="#f7f7f7" stroke="#c9c9c9" stroke-width="1.200"/><path d="M9 4v10M4 9h10" stroke="#c4c4c4" stroke-width="1.600"/></svg>
<!-- ===== tabs ===== -->
<span class="t" style="left:32.5px;top:117.00px;font-size:12px;line-height:12px;letter-spacing:0.257px;">Welcome Screen</span>
<span class="t" style="left:145.5px;top:117.00px;font-size:12px;line-height:12px;letter-spacing:0.238px;">Untitled-1</span>
<svg style="left:224px;top:118px" width="9" height="9" viewBox="0 0 9 9"><path d="M4.500 0v9M0 4.500h9" stroke="#8a8a8a" stroke-width="1.200"/></svg>
<!-- ruler corner -->
<svg style="left:35px;top:138px" width="12" height="12" viewBox="0 0 12 12"><path d="M4.500 0v11M0 4.500h11" stroke="#222" stroke-width="1" stroke-dasharray="1 1"/><path d="M4.500 4.500l6 6M10.500 10.500V7M10.500 10.500H7" stroke="#222" stroke-width="1.200" fill="none"/></svg>
<svg style="left:0;top:133px" width="1091" height="19" viewBox="0 0 1091 19">
<path d="M58.5 16v1M70.5 16v1M82.5 16v1M105.5 16v1M117.5 16v1M129.5 16v1M141.5 16v1M164.5 16v1M176.5 16v1M188.5 16v1M200.5 16v1M223.5 16v1M235.5 16v1M247.5 16v1M259.5 16v1M282.5 16v1M294.5 16v1M306.5 16v1M318.5 16v1M341.5 16v1M353.5 16v1M365.5 16v1M377.5 16v1M400.5 16v1M412.5 16v1M424.5 16v1M436.5 16v1M459.5 16v1M471.5 16v1M483.5 16v1M495.5 16v1M519.5 16v1M530.5 16v1M542.5 16v1M554.5 16v1M578.5 16v1M589.5 16v1M601.5 16v1M613.5 16v1M637.5 16v1M648.5 16v1M660.5 16v1M672.5 16v1M696.5 16v1M707.5 16v1M719.5 16v1M731.5 16v1M755.5 16v1M767.5 16v1M778.5 16v1M790.5 16v1M814.5 16v1M826.5 16v1M837.5 16v1M849.5 16v1M873.5 16v1M885.5 16v1M896.5 16v1M908.5 16v1M932.5 16v1M944.5 16v1M955.5 16v1M967.5 16v1M991.5 16v1M1003.5 16v1M1015.5 16v1M1026.5 16v1M1050.5 16v1M1062.5 16v1M1074.5 16v1M1085.5 16v1" stroke="#6e6e6e" stroke-width="1"/>
<path d="M93.5 15v2M211.5 15v2M330.5 15v2M448.5 15v2M566.5 15v2M684.5 15v2M802.5 15v2M920.5 15v2M1038.5 15v2" stroke="#6e6e6e" stroke-width="1"/>
<path d="M152.5 12v5M271.5 12v5M389.5 12v5M507.5 12v5M625.5 12v5M743.5 12v5M861.5 12v5M979.5 12v5" stroke="#6e6e6e" stroke-width="1"/>
</svg>
<span class="t" style="left:268.7px;top:135.75px;font-size:9.5px;line-height:9.5px;color:#7a7a7a;letter-spacing:1.403px;">0</span>
<span class="t" style="left:386.8px;top:135.75px;font-size:9.5px;line-height:9.5px;color:#7a7a7a;letter-spacing:1.403px;">5</span>
<span class="t" style="left:503.6px;top:135.75px;font-size:9.5px;line-height:9.5px;color:#7a7a7a;letter-spacing:1.122px;">10</span>
<span class="t" style="left:621.7px;top:135.75px;font-size:9.5px;line-height:9.5px;color:#7a7a7a;letter-spacing:1.122px;">15</span>
<span class="t" style="left:739.8px;top:135.75px;font-size:9.5px;line-height:9.5px;color:#7a7a7a;letter-spacing:1.122px;">20</span>
<span class="t" style="left:857.9px;top:135.75px;font-size:9.5px;line-height:9.5px;color:#7a7a7a;letter-spacing:1.122px;">25</span>
<span class="t" style="left:976px;top:135.75px;font-size:9.5px;line-height:9.5px;color:#7a7a7a;letter-spacing:1.122px;">30</span>
<span class="t" style="left:1036.5px;top:135.75px;font-size:9.5px;line-height:9.5px;color:#7a7a7a;letter-spacing:0.239px;">centimeters</span>
<svg style="left:30px;top:152px" width="20" height="655" viewBox="0 0 20 655">
<path d="M16 647.5h1M16 635.5h1M16 612.5h1M16 600.5h1M16 588.5h1M16 576.5h1M16 553.5h1M16 541.5h1M16 529.5h1M16 517.5h1M16 494.5h1M16 482.5h1M16 470.5h1M16 458.5h1M16 435.5h1M16 423.5h1M16 411.5h1M16 399.5h1M16 376.5h1M16 364.5h1M16 352.5h1M16 340.5h1M16 317.5h1M16 305.5h1M16 293.5h1M16 281.5h1M16 258.5h1M16 246.5h1M16 234.5h1M16 222.5h1M16 199.5h1M16 187.5h1M16 175.5h1M16 163.5h1M16 140.5h1M16 128.5h1M16 116.5h1M16 104.5h1M16 81.5h1M16 69.5h1M16 57.5h1M16 45.5h1M16 22.5h1M16 10.5h1" stroke="#6e6e6e" stroke-width="1"/>
<path d="M15 624.5h2M15 506.5h2M15 388.5h2M15 270.5h2M15 152.5h2M15 34.5h2" stroke="#6e6e6e" stroke-width="1"/>
<path d="M12 565.5h5M12 447.5h5M12 329.5h5M12 211.5h5M12 93.5h5" stroke="#6e6e6e" stroke-width="1"/>
</svg>
<span class="t" style="left:41.3px;top:711.55px;font-size:9.5px;line-height:9.5px;color:#7a7a7a;letter-spacing:1.403px;transform-origin:0 8.25px;transform:rotate(-90deg);">0</span>
<span class="t" style="left:41.3px;top:593.55px;font-size:9.5px;line-height:9.5px;color:#7a7a7a;letter-spacing:1.403px;transform-origin:0 8.25px;transform:rotate(-90deg);">5</span>
<span class="t" style="left:41.3px;top:476.85px;font-size:9.5px;line-height:9.5px;color:#7a7a7a;letter-spacing:1.122px;transform-origin:0 8.25px;transform:rotate(-90deg);">10</span>
<span class="t" style="left:41.3px;top:358.85px;font-size:9.5px;line-height:9.5px;color:#7a7a7a;letter-spacing:1.122px;transform-origin:0 8.25px;transform:rotate(-90deg);">15</span>
<span class="t" style="left:41.3px;top:240.85px;font-size:9.5px;line-height:9.5px;color:#7a7a7a;letter-spacing:1.122px;transform-origin:0 8.25px;transform:rotate(-90deg);">20</span>
<span class="t" style="left:41.3px;top:794.25px;font-size:9.5px;line-height:9.5px;color:#7a7a7a;letter-spacing:0.189px;transform-origin:0 8.25px;transform:rotate(-90deg);">centimeters</span>
<!-- page -->
<div class="a" style="left:277px;top:225px;width:703px;height:497px;background:#c1c1c1"></div>
<div class="a" style="left:271px;top:221px;width:703px;height:497px;background:#fff;border:1px solid #9c9c9c"></div>
<!-- green rectangle -->
<div class="a" style="left:311px;top:260px;width:594px;height:426px;background:#b0cc98;border:1px solid #939a8c"></div>
<div class="a" style="left:309px;top:258px;width:4px;height:4px;background:#fff;border:1px solid #000"></div>
<div class="a" style="left:902px;top:258px;width:4px;height:4px;background:#fff;border:1px solid #000"></div>
<div class="a" style="left:309px;top:683px;width:4px;height:4px;background:#fff;border:1px solid #000"></div>
<div class="a" style="left:902px;top:683px;width:4px;height:4px;background:#fff;border:1px solid #000"></div>
<!-- ghost transparency slider -->
<div class="a" style="left:558px;top:701px;width:100px;height:25px;background:#fff;border:1px solid #ececec;box-shadow:1px 1px 2px rgba(0,0,0,.08)"></div>
<div class="a" style="left:563px;top:712px;width:54px;height:2px;background:#efefef"></div>
<div class="a" style="left:586px;top:705px;width:4px;height:15px;background:#c6dcf5"></div>
<div class="a" style="left:622px;top:703px;width:1px;height:20px;background:#e6e6e6"></div>
<span class="t" style="left:625.5px;top:707.50px;font-size:11px;line-height:11px;color:#d4d4d4;letter-spacing:1.250px;">50</span>
<!-- v scrollbar -->
<div class="a" style="left:1074px;top:153px;width:16px;height:16px;background:#f0f0f0"></div>
<svg style="left:1077px;top:157px" width="10" height="7" viewBox="0 0 10 7"><path d="M1 6l4-4 4 4" fill="none" stroke="#444" stroke-width="1.800"/></svg>
<div class="a" style="left:1074px;top:301px;width:15px;height:342px;background:#cdcdcd"></div>
<div class="a" style="left:1074px;top:772px;width:16px;height:17px;background:#f0f0f0"></div>
<svg style="left:1077px;top:777px" width="10" height="7" viewBox="0 0 10 7"><path d="M1 1l4 4 4-4" fill="none" stroke="#444" stroke-width="1.800"/></svg>
<!-- bottom nav + h scrollbar -->
<div class="a" style="left:50px;top:789px;width:1041px;height:18px;background:#fff"></div>
<div class="a" style="left:50px;top:789px;width:517px;height:18px;background:#f4f4f4;border-top:1px solid #8a8a8a"></div>
<div class="a" style="left:30px;top:807px;width:1061px;height:1px;background:#d8d8d8"></div>
<svg style="left:52px;top:791px" width="10" height="12" viewBox="0 0 10 12"><path d="M.7 .7h5l3.600 3.300v7.300H.7z" fill="#fff" stroke="#111" stroke-width="1.300"/><path d="M5.500 .7v3.500h3.800" fill="none" stroke="#111" stroke-width="1.100"/><path d="M4.800 5v5M2.300 7.500h5" stroke="#111" stroke-width="1.400"/></svg>
<svg style="left:198px;top:791px" width="10" height="12" viewBox="0 0 10 12"><path d="M.7 .7h5l3.600 3.300v7.300H.7z" fill="#fff" stroke="#111" stroke-width="1.300"/><path d="M5.500 .7v3.500h3.800" fill="none" stroke="#111" stroke-width="1.100"/><path d="M4.800 5v5M2.300 7.500h5" stroke="#111" stroke-width="1.400"/></svg>
<svg style="left:69px;top:793px" width="9" height="9" viewBox="0 0 9 9"><path d="M1 0v9" stroke="#888" stroke-width="1.300"/><path d="M8 0v9L3 4.500z" fill="#888"/></svg>
<svg style="left:89px;top:793px" width="6" height="9" viewBox="0 0 6 9"><path d="M6 0v9L0 4.500z" fill="#888"/></svg>
<span class="t" style="left:114.5px;top:792.00px;font-size:12px;line-height:12px;letter-spacing:-0.106px;">1 of 1</span>
<svg style="left:166px;top:793px" width="6" height="9" viewBox="0 0 6 9"><path d="M0 0v9l6-4.500z" fill="#888"/></svg>
<svg style="left:181px;top:793px" width="9" height="9" viewBox="0 0 9 9"><path d="M8 0v9" stroke="#888" stroke-width="1.300"/><path d="M1 0v9l5-4.500z" fill="#888"/></svg>
<svg style="left:212px;top:789px" width="68" height="18" viewBox="0 0 68 18"><path d="M.5 17V.5h58.500l7 7.500v9z" fill="#fff" stroke="#9a9a9a"/></svg>
<span class="t" style="left:226.5px;top:791.00px;font-size:12px;line-height:12px;letter-spacing:-0.509px;">Page 1</span>
<svg style="left:567px;top:791px" width="3" height="14" viewBox="0 0 3 14"><path d="M1.500 0v14" stroke="#999" stroke-width="1.500" stroke-dasharray="1.500 1.500"/></svg>
<div class="a" style="left:571px;top:790px;width:16px;height:16px;background:#f0f0f0"></div>
<svg style="left:575px;top:793px" width="7" height="10" viewBox="0 0 7 10"><path d="M6 1l-4 4 4 4" fill="none" stroke="#333" stroke-width="1.800"/></svg>
<div class="a" style="left:656px;top:790px;width:297px;height:15px;background:#cdcdcd"></div>
<div class="a" style="left:1056px;top:790px;width:17px;height:16px;background:#f0f0f0"></div>
<svg style="left:1061px;top:793px" width="7" height="10" viewBox="0 0 7 10"><path d="M1 1l4 4-4 4" fill="none" stroke="#333" stroke-width="1.800"/></svg>
<svg style="left:1075px;top:791px" width="15" height="15" viewBox="0 0 15 15"><circle cx="6" cy="6" r="4.800" fill="#fff" stroke="#3a3a5a" stroke-width="1.200"/><circle cx="6" cy="6" r="2.200" fill="none" stroke="#3a3a5a" stroke-width="1"/><path d="M6 2.500v7M2.500 6h7" stroke="#8a8aa8" stroke-width=".7"/><path d="M9.500 9.500l4.500 4.500" stroke="#3a3a5a" stroke-width="2"/></svg>
<!-- doc palette strip -->
<svg style="left:34px;top:811px" width="3" height="12" viewBox="0 0 3 12"><path d="M1.500 0v12" stroke="#aaa" stroke-width="1.500" stroke-dasharray="1.500 2"/></svg>
<svg style="left:41px;top:812px" width="6" height="10" viewBox="0 0 6 10"><path d="M0 0v10l6-5z" fill="#111"/></svg>
<svg style="left:53px;top:810px" width="14" height="14" viewBox="0 0 14 14"><path d="M1 13l1-3 5.500-5.500 2 2L4 12z" fill="#7aa09a" stroke="#444" stroke-width=".8"/><path d="M7 3.500l3.500 3.500" stroke="#222" stroke-width="2"/><circle cx="10.800" cy="3.200" r="2.400" fill="#2a2a3a"/></svg>
<svg style="left:71px;top:812px" width="6" height="10" viewBox="0 0 6 10"><path d="M5 1L1 5l4 4" fill="none" stroke="#d0d0d0" stroke-width="1.300"/></svg>
<div class="a" style="left:83px;top:808px;width:120px;height:18px;background:#5a5a5a"></div>
<svg style="left:84px;top:809px" width="16" height="16" viewBox="0 0 16 16"><rect width="16" height="16" fill="#fff"/><path d="M0 0l16 16M16 0L0 16" stroke="#222" stroke-width=".9"/></svg>
<div class="a" style="left:101px;top:809px;width:16px;height:16px;background:#33cc99"></div>
<div class="a" style="left:118px;top:809px;width:16px;height:16px;background:#9933cc"></div>
<div class="a" style="left:135px;top:809px;width:16px;height:16px;background:#3300cc"></div>
<div class="a" style="left:152px;top:809px;width:16px;height:16px;background:#33cc33"></div>
<div class="a" style="left:169px;top:809px;width:16px;height:16px;background:#ff99ff"></div>
<div class="a" style="left:186px;top:809px;width:16px;height:16px;background:#669933"></div>
<svg style="left:1057px;top:812px" width="6" height="10" viewBox="0 0 6 10"><path d="M1 1l4 4-4 4" fill="none" stroke="#d0d0d0" stroke-width="1.300"/></svg>
<svg style="left:1072px;top:813px" width="8" height="8" viewBox="0 0 8 8"><path d="M.5 .5L4 4 .5 7.500M4 .5L7.500 4 4 7.500" fill="none" stroke="#c8c8c8" stroke-width="1"/></svg>
<!-- splitter between canvas and docker -->
<div class="a" style="left:1091px;top:113px;width:5px;height:714px;background:#fff"></div>
<div class="a" style="left:1093px;top:115px;width:1px;height:710px;background:#cfcfcf"></div>
<!-- tooltip -->
<div class="a" style="left:54px;top:120px;width:193px;height:51px;background:#fff;border:1px solid #767676;box-shadow:3px 3px 3px rgba(0,0,0,.35)"></div>
<span class="t" style="left:59.5px;top:124.00px;font-size:12px;line-height:12px;font-weight:bold;color:#575757;letter-spacing:-0.063px;">Uniform transparency</span>
<span class="t" style="left:59.5px;top:140.00px;font-size:12px;line-height:12px;color:#575757;letter-spacing:0.041px;">Apply a regular, evenly distributed</span>
<span class="t" style="left:59.5px;top:155.00px;font-size:12px;line-height:12px;color:#575757;letter-spacing:0.057px;">transparency.</span>
<!-- ===== docker ===== -->
<div class="a" style="left:1096px;top:113px;width:291px;height:19px;background:#e9e9e9"></div>
<div class="a" style="left:1096px;top:132px;width:272px;height:1px;background:#bcbcbc"></div>
<span class="t" style="left:1098.5px;top:117.00px;font-size:12px;line-height:12px;letter-spacing:0.089px;">Transformations</span>
<svg style="left:1356px;top:118px" width="9" height="8" viewBox="0 0 9 8"><path d="M0 0l4 4-4 4zM4.500 0l4 4-4 4z" fill="#bdbdbd"/></svg>
<svg style="left:1373px;top:118px" width="8" height="8" viewBox="0 0 8 8"><path d="M.5 .5l7 7M7.500 .5l-7 7" stroke="#a8a8a8" stroke-width="1.100"/></svg>
<svg style="left:1136px;top:140px" width="15" height="15" viewBox="0 0 15 15"><path d="M7.500 .8L10.200 3.800H9.200V5.800h2V4.800l3 2.700-3 2.700V9.200h-2v2h1l-2.700 3-2.700-3h1v-2h-2v1l-3-2.700 3-2.700v1h2V3.800h-1z" fill="#fff" stroke="#4a4a64" stroke-width="1.200" stroke-linejoin="round"/></svg>
<div class="a" style="left:1161px;top:137px;width:23px;height:23px;background:#fff;border:1px solid #a0a0a0"></div>
<svg style="left:1164px;top:140px" width="16" height="16" viewBox="0 0 16 16"><path d="M3 8A5.500 5.500 0 1 1 4.600 11.900" fill="none" stroke="#44445a" stroke-width="1.400"/><path d="M.3 6.300h5.400L3 10z" fill="#44445a"/></svg>
<svg style="left:1192px;top:139px" width="17" height="17" viewBox="0 0 17 17"><path d="M4 1.500h8.500L9.500 8H1.500z" fill="#f4f4fa" stroke="#6a6a8a" stroke-width="1"/><path d="M1.500 8h8l3.500 7.500H5z" fill="#dcdcea" stroke="#8a8aa6" stroke-width="1"/><path d="M14.500 1v7.500" stroke="#16162a" stroke-width="1.300"/><path d="M12.500 7h4l-2 3z" fill="#16162a"/></svg>
<svg style="left:1220px;top:140px" width="16" height="16" viewBox="0 0 16 16"><rect x=".5" y=".5" width="14" height="14" fill="none" stroke="#55557a" stroke-width="1" stroke-dasharray="1 1.500"/><rect x=".6" y="6.600" width="8" height="8" fill="#fff" stroke="#4a4a64" stroke-width="1.200"/><rect x="1.200" y="10.500" width="6.800" height="3.500" fill="#dcdcea"/><path d="M10.500 10.500h3M4.500 2v3" stroke="#22223a" stroke-width="1.100"/><path d="M12.500 8.800l2.300 1.700-2.300 1.700zM2.800 3.200L4.500 1l1.700 2.200z" fill="#22223a"/></svg>
<svg style="left:1248px;top:141px" width="17" height="14" viewBox="0 0 17 14"><path d="M1.500 6.200h8.500l5.500 6.300H7z" fill="#dcdcea" stroke="#33334a" stroke-width="1.500" stroke-linejoin="round"/><path d="M3 1.800h7" stroke="#33334a" stroke-width="1.300"/><path d="M4.200 0L1.200 1.800l3 1.800z" fill="#33334a"/></svg>
<div class="hl" style="left:1101px;top:166px;width:262px;background:#d6d6d6"></div>
<svg style="left:1136px;top:177px" width="14" height="14" viewBox="0 0 14 14"><path d="M2.700 7A4.800 4.800 0 1 1 4.100 10.400" fill="none" stroke="#44445a" stroke-width="1.300"/><path d="M.3 5.500h4.800L2.700 8.800z" fill="#44445a"/></svg>
<div class="inp" style="left:1153px;top:173px;width:82px;height:23px"></div>
<span class="t" style="left:1156.5px;top:179.00px;font-size:12px;line-height:12px;letter-spacing:0.406px;">0.0</span>
<div class="spin" style="left:1217px;top:175px;height:19px"></div>
<div class="a" style="left:1218px;top:184px;width:13px;height:1px;background:#c4c4c4"></div>
<svg style="left:1221px;top:178px" width="7" height="13" viewBox="0 0 7 13"><path d="M0 4l3.500-4L7 4zM0 9.500l3.500 3.500L7 9.500z" fill="#111"/></svg>
<svg style="left:1240px;top:178px" width="6" height="6" viewBox="0 0 6 6"><circle cx="3" cy="3" r="2" fill="none" stroke="#333" stroke-width=".9"/></svg>
<div class="hl" style="left:1141px;top:202px;width:222px;background:#d6d6d6"></div>
<span class="t" style="left:1099.5px;top:203.00px;font-size:12px;line-height:12px;letter-spacing:0.094px;">Center</span>
<span class="t" style="left:1137px;top:227.00px;font-size:12px;line-height:12px;">x:</span>
<div class="inp" style="left:1153px;top:221px;width:85px;height:23px"></div>
<span class="t" style="left:1156.5px;top:227.00px;font-size:12px;line-height:12px;letter-spacing:-0.318px;">14.225 cm</span>
<div class="spin" style="left:1220px;top:223px;height:19px"></div>
<div class="a" style="left:1221px;top:232px;width:13px;height:1px;background:#c4c4c4"></div>
<svg style="left:1224px;top:226px" width="7" height="13" viewBox="0 0 7 13"><path d="M0 4l3.500-4L7 4zM0 9.500l3.500 3.500L7 9.500z" fill="#111"/></svg>
<span class="t" style="left:1137px;top:255.00px;font-size:12px;line-height:12px;">y:</span>
<div class="inp" style="left:1153px;top:249px;width:85px;height:23px"></div>
<span class="t" style="left:1156.5px;top:255.00px;font-size:12px;line-height:12px;letter-spacing:-0.318px;">10.366 cm</span>
<div class="spin" style="left:1220px;top:251px;height:19px"></div>
<div class="a" style="left:1221px;top:260px;width:13px;height:1px;background:#c4c4c4"></div>
<svg style="left:1224px;top:254px" width="7" height="13" viewBox="0 0 7 13"><path d="M0 4l3.500-4L7 4zM0 9.500l3.500 3.500L7 9.500z" fill="#111"/></svg>
<div class="a" style="left:1150px;top:278px;width:13px;height:13px;background:#fff;border:1px solid #333"></div>
<span class="t" style="left:1165.5px;top:279.00px;font-size:12px;line-height:12px;letter-spacing:-0.158px;">Relative Center</span>
<svg style="left:1152px;top:298px" width="46" height="48" viewBox="0 0 46 48"><g fill="#fff" stroke="#8a8aa6" stroke-width="1"><rect x="2.0" y="3.0" width="5" height="5"/><path d="M7 5.500h4M4.500 8v4" fill="none"/><rect x="20.0" y="3.0" width="5" height="5"/><path d="M16 5.500h4M25 5.500h4" fill="none"/><rect x="38.0" y="3.0" width="5" height="5"/><path d="M34 5.500h4M40.500 8v4" fill="none"/><rect x="2.0" y="21.0" width="5" height="5"/><path d="M4.500 17v4M4.500 26v4" fill="none"/><rect x="38.0" y="21.0" width="5" height="5"/><path d="M40.500 17v4M40.500 26v4" fill="none"/><rect x="2.0" y="39.0" width="5" height="5"/><path d="M7 41.500h4M4.500 35v4" fill="none"/><rect x="20.0" y="39.0" width="5" height="5"/><path d="M16 41.500h4M25 41.500h4" fill="none"/><rect x="38.0" y="39.0" width="5" height="5"/><path d="M34 41.500h4M40.500 35v4" fill="none"/><rect x="16.500" y="17.500" width="12" height="12" stroke="#a0a0a0"/><rect x="20" y="21" width="5" height="5"/></g></svg>
<div class="hl" style="left:1101px;top:352px;width:262px;background:#d6d6d6"></div>
<span class="t" style="left:1105.5px;top:365.00px;font-size:12px;line-height:12px;letter-spacing:-0.031px;">Copies:</span>
<div class="inp" style="left:1150px;top:359px;width:88px;height:23px"></div>
<span class="t" style="left:1153.5px;top:365.00px;font-size:12px;line-height:12px;letter-spacing:-1.188px;">1</span>
<div class="spin" style="left:1220px;top:361px;height:19px"></div>
<div class="a" style="left:1221px;top:370px;width:13px;height:1px;background:#c4c4c4"></div>
<svg style="left:1224px;top:364px" width="7" height="13" viewBox="0 0 7 13"><path d="M0 4l3.500-4L7 4zM0 9.500l3.500 3.500L7 9.500z" fill="#111"/></svg>
<div class="hl" style="left:1101px;top:388px;width:262px;background:#d6d6d6"></div>
<div class="a" style="left:1285px;top:395px;width:78px;height:23px;background:#e1e1e1;border:1px solid #adadad"></div>
<span class="t" style="left:1307.5px;top:401.00px;font-size:12px;line-height:12px;letter-spacing:0.617px;">Apply</span>
<div class="a" style="left:1367px;top:133px;width:20px;height:694px;background:#e9e9e9"></div>
<div class="a" style="left:1367px;top:132px;width:20px;height:127px;background:#b4b4b4"></div>
<div class="a" style="left:1367px;top:261px;width:20px;height:90px;background:#dcdcdc"></div>
<svg style="left:1370px;top:135px" width="15" height="17" viewBox="0 0 15 17"><path d="M6.500 6.500A4.300 4.300 0 1 0 9 14" fill="none" stroke="#55557a" stroke-width="1.300"/><path d="M10.500 1l2 2.200h-1.300V5h1.800V3.800L15 5.800 13 7.800V6.500h-1.800v1.800h1.300l-2 2.200-2-2.200h1.300V6.500H8V7.800L6 5.800l2-2V5h1.800V3.200H8.500z" fill="#44445a"/></svg>
<span class="t" style="left:1372px;top:147.00px;font-size:12px;line-height:12px;letter-spacing:-0.089px;transform-origin:0 10px;transform:rotate(90deg);">Transformations</span>
<svg style="left:1370px;top:266px" width="15" height="13" viewBox="0 0 15 13"><g fill="none" stroke="#7a7a9a" stroke-width="1"><path d="M2 3.500c3-1.500 8-1.500 11 0M2 9.500c3 1.500 8 1.500 11 0M2.500 3v7M12.500 3v7M7.500 2v9"/></g><g fill="#fff" stroke="#55557a" stroke-width=".9"><rect x="1" y="2" width="3" height="3"/><rect x="11" y="2" width="3" height="3"/><rect x="1" y="8" width="3" height="3"/><rect x="11" y="8" width="3" height="3"/><rect x="6" y="1" width="3" height="3"/><rect x="6" y="9" width="3" height="3"/></g></svg>
<span class="t" style="left:1372px;top:276.00px;font-size:12px;line-height:12px;letter-spacing:-0.078px;transform-origin:0 10px;transform:rotate(90deg);">Envelope</span>
<svg style="left:1369px;top:370px" width="17" height="17" viewBox="0 0 17 17"><circle cx="8.500" cy="8.500" r="7.300" fill="#f4f4f4" stroke="#c9c9c9" stroke-width="1.100"/><path d="M8.500 4v9M4 8.500h9" stroke="#c4c4c4" stroke-width="1.500"/></svg>
<!-- ===== color palette ===== -->
<div class="a" style="left:1387px;top:113px;width:53px;height:714px;background:#f4f4f4;border-left:1px solid #fff"></div>
<svg style="left:1391px;top:117px" width="46" height="2" viewBox="0 0 46 2"><path d="M0 1h46" stroke="#b8b8b8" stroke-width="1.600" stroke-dasharray="1.600 2"/></svg>
<svg style="left:1410px;top:123px" width="6" height="10" viewBox="0 0 6 10"><path d="M0 0v10l6-5z" fill="#111"/></svg>
<svg style="left:1407px;top:135.500px" width="14" height="14" viewBox="0 0 14 14"><path d="M1 13l1-3 5.500-5.500 2 2L4 12z" fill="#dcdcdc" stroke="#c2c2c2" stroke-width=".8"/><path d="M7 3.500l3.500 3.500" stroke="#bdbdbd" stroke-width="2"/><circle cx="10.800" cy="3.200" r="2.400" fill="#c4c4c4"/></svg>
<div class="a" style="left:1388px;top:150px;width:35px;height:664px;background:#5a5a5a"></div>
<div class="a" style="left:1422px;top:150px;width:18px;height:375px;background:#5a5a5a"></div>
<svg style="left:1389px;top:151px" width="16" height="16" viewBox="0 0 16 16"><rect width="16" height="16" fill="#fff"/><path d="M0 0l16 16M16 0L0 16" stroke="#222" stroke-width=".9"/></svg>
<div class="a" style="left:1389px;top:168px;width:16px;height:16px;background:#000000"></div>
<div class="a" style="left:1389px;top:185px;width:16px;height:16px;background:#1a1a1a"></div>
<div class="a" style="left:1389px;top:202px;width:16px;height:16px;background:#333333"></div>
<div class="a" style="left:1389px;top:219px;width:16px;height:16px;background:#4d4d4d"></div>
<div class="a" style="left:1389px;top:236px;width:16px;height:16px;background:#666666"></div>
<div class="a" style="left:1389px;top:253px;width:16px;height:16px;background:#808080"></div>
<div class="a" style="left:1389px;top:270px;width:16px;height:16px;background:#999999"></div>
<div class="a" style="left:1389px;top:287px;width:16px;height:16px;background:#b3b3b3"></div>
<div class="a" style="left:1389px;top:304px;width:16px;height:16px;background:#cccccc"></div>
<div class="a" style="left:1389px;top:321px;width:16px;height:16px;background:#e6e6e6"></div>
<div class="a" style="left:1389px;top:338px;width:16px;height:16px;background:#ffffff"></div>
<div class="a" style="left:1389px;top:355px;width:16px;height:16px;background:#0000ff"></div>
<div class="a" style="left:1389px;top:372px;width:16px;height:16px;background:#00ffff"></div>
<div class="a" style="left:1389px;top:389px;width:16px;height:16px;background:#00ff00"></div>
<div class="a" style="left:1389px;top:406px;width:16px;height:16px;background:#ffff00"></div>
<div class="a" style="left:1389px;top:423px;width:16px;height:16px;background:#ff0000"></div>
<div class="a" style="left:1389px;top:440px;width:16px;height:16px;background:#ff00ff"></div>
<div class="a" style="left:1389px;top:457px;width:16px;height:16px;background:#9900cc"></div>
<div class="a" style="left:1389px;top:474px;width:16px;height:16px;background:#ff6600"></div>
<div class="a" style="left:1389px;top:491px;width:16px;height:16px;background:#ff99cc"></div>
<div class="a" style="left:1389px;top:508px;width:16px;height:16px;background:#663333"></div>
<div class="a" style="left:1389px;top:525px;width:16px;height:16px;background:#ccccff"></div>
<div class="a" style="left:1389px;top:542px;width:16px;height:16px;background:#9999ff"></div>
<div class="a" style="left:1389px;top:559px;width:16px;height:16px;background:#6699ff"></div>
<div class="a" style="left:1389px;top:576px;width:16px;height:16px;background:#6666ff"></div>
<div class="a" style="left:1389px;top:593px;width:16px;height:16px;background:#6666cc"></div>
<div class="a" style="left:1389px;top:610px;width:16px;height:16px;background:#003399"></div>
<div class="a" style="left:1389px;top:627px;width:16px;height:16px;background:#000066"></div>
<div class="a" style="left:1389px;top:644px;width:16px;height:16px;background:#336699"></div>
<div class="a" style="left:1389px;top:661px;width:16px;height:16px;background:#00ccff"></div>
<div class="a" style="left:1389px;top:678px;width:16px;height:16px;background:#99ffff"></div>
<div class="a" style="left:1389px;top:695px;width:16px;height:16px;background:#99cccc"></div>
<div class="a" style="left:1389px;top:712px;width:16px;height:16px;background:#669999"></div>
<div class="a" style="left:1389px;top:729px;width:16px;height:16px;background:#336666"></div>
<div class="a" style="left:1389px;top:746px;width:16px;height:16px;background:#003333"></div>
<div class="a" style="left:1389px;top:763px;width:16px;height:16px;background:#006633"></div>
<div class="a" style="left:1389px;top:780px;width:16px;height:16px;background:#009933"></div>
<div class="a" style="left:1389px;top:797px;width:16px;height:16px;background:#339966"></div>
<div class="a" style="left:1406px;top:151px;width:16px;height:16px;background:#33cc66"></div>
<div class="a" style="left:1406px;top:168px;width:16px;height:16px;background:#33cc33"></div>
<div class="a" style="left:1406px;top:185px;width:16px;height:16px;background:#66ffcc"></div>
<div class="a" style="left:1406px;top:202px;width:16px;height:16px;background:#33cc99"></div>
<div class="a" style="left:1406px;top:219px;width:16px;height:16px;background:#99cc99"></div>
<div class="a" style="left:1406px;top:236px;width:16px;height:16px;background:#ccffcc"></div>
<div class="a" style="left:1406px;top:253px;width:16px;height:16px;background:#99ff99"></div>
<div class="a" style="left:1406px;top:270px;width:16px;height:16px;background:#669966"></div>
<div class="a" style="left:1406px;top:287px;width:16px;height:16px;background:#669933"></div>
<div class="a" style="left:1406px;top:304px;width:16px;height:16px;background:#99cc33"></div>
<div class="a" style="left:1406px;top:321px;width:16px;height:16px;background:#99cc66"></div>
<div class="a" style="left:1406px;top:338px;width:16px;height:16px;background:#99ff00"></div>
<div class="a" style="left:1406px;top:355px;width:16px;height:16px;background:#ccff66"></div>
<div class="a" style="left:1406px;top:372px;width:16px;height:16px;background:#333300"></div>
<div class="a" style="left:1406px;top:389px;width:16px;height:16px;background:#666633"></div>
<div class="a" style="left:1406px;top:406px;width:16px;height:16px;background:#999966"></div>
<div class="a" style="left:1406px;top:423px;width:16px;height:16px;background:#999933"></div>
<div class="a" style="left:1406px;top:440px;width:16px;height:16px;background:#cccc33"></div>
<div class="a" style="left:1406px;top:457px;width:16px;height:16px;background:#ffff66"></div>
<div class="a" style="left:1406px;top:474px;width:16px;height:16px;background:#ffff99"></div>
<div class="a" style="left:1406px;top:491px;width:16px;height:16px;background:#ffffcc"></div>
<div class="a" style="left:1406px;top:508px;width:16px;height:16px;background:#996633"></div>
<div class="a" style="left:1406px;top:525px;width:16px;height:16px;background:#cc6633"></div>
<div class="a" style="left:1406px;top:542px;width:16px;height:16px;background:#cc9933"></div>
<div class="a" style="left:1406px;top:559px;width:16px;height:16px;background:#ff6633"></div>
<div class="a" style="left:1406px;top:576px;width:16px;height:16px;background:#ff9933"></div>
<div class="a" style="left:1406px;top:593px;width:16px;height:16px;background:#ff9966"></div>
<div class="a" style="left:1406px;top:610px;width:16px;height:16px;background:#ffcc00"></div>
<div class="a" style="left:1406px;top:627px;width:16px;height:16px;background:#ffcc99"></div>
<div class="a" style="left:1406px;top:644px;width:16px;height:16px;background:#663300"></div>
<div class="a" style="left:1406px;top:661px;width:16px;height:16px;background:#990000"></div>
<div class="a" style="left:1406px;top:678px;width:16px;height:16px;background:#cc3300"></div>
<div class="a" style="left:1406px;top:695px;width:16px;height:16px;background:#ff6666"></div>
<div class="a" style="left:1406px;top:712px;width:16px;height:16px;background:#ff9999"></div>
<div class="a" style="left:1406px;top:729px;width:16px;height:16px;background:#ffcccc"></div>
<div class="a" style="left:1406px;top:746px;width:16px;height:16px;background:#993366"></div>
<div class="a" style="left:1406px;top:763px;width:16px;height:16px;background:#cc3366"></div>
<div class="a" style="left:1406px;top:780px;width:16px;height:16px;background:#cc3399"></div>
<div class="a" style="left:1406px;top:797px;width:16px;height:16px;background:#ff0066"></div>
<div class="a" style="left:1423px;top:151px;width:17px;height:16px;background:#ff6699"></div>
<div class="a" style="left:1423px;top:168px;width:17px;height:16px;background:#ff3399"></div>
<div class="a" style="left:1423px;top:185px;width:17px;height:16px;background:#cc6699"></div>
<div class="a" style="left:1423px;top:202px;width:17px;height:16px;background:#660066"></div>
<div class="a" style="left:1423px;top:219px;width:17px;height:16px;background:#990099"></div>
<div class="a" style="left:1423px;top:236px;width:17px;height:16px;background:#ff99ff"></div>
<div class="a" style="left:1423px;top:253px;width:17px;height:16px;background:#cc66cc"></div>
<div class="a" style="left:1423px;top:270px;width:17px;height:16px;background:#996699"></div>
<div class="a" style="left:1423px;top:287px;width:17px;height:16px;background:#cc99cc"></div>
<div class="a" style="left:1423px;top:304px;width:17px;height:16px;background:#9933cc"></div>
<div class="a" style="left:1423px;top:321px;width:17px;height:16px;background:#cc33ff"></div>
<div class="a" style="left:1423px;top:338px;width:17px;height:16px;background:#cc66ff"></div>
<div class="a" style="left:1423px;top:355px;width:17px;height:16px;background:#9966cc"></div>
<div class="a" style="left:1423px;top:372px;width:17px;height:16px;background:#cc99ff"></div>
<div class="a" style="left:1423px;top:389px;width:17px;height:16px;background:#330066"></div>
<div class="a" style="left:1423px;top:406px;width:17px;height:16px;background:#663399"></div>
<div class="a" style="left:1423px;top:423px;width:17px;height:16px;background:#9966ff"></div>
<div class="a" style="left:1423px;top:440px;width:17px;height:16px;background:#9900ff"></div>
<div class="a" style="left:1423px;top:457px;width:17px;height:16px;background:#6600cc"></div>
<div class="a" style="left:1423px;top:474px;width:17px;height:16px;background:#6633ff"></div>
<div class="a" style="left:1423px;top:491px;width:17px;height:16px;background:#330099"></div>
<div class="a" style="left:1423px;top:508px;width:17px;height:16px;background:#3300cc"></div>
<div class="a" style="left:1405px;top:286px;width:18px;height:18px;border:1px solid #fff;background:#669933;box-shadow:0 0 0 0 #fff"></div>
<!-- ===== status bar (y 827-859) ===== -->
<div class="a" style="left:0;top:826px;width:1440px;height:1px;background:#d6d6d6"></div>
<div class="a" style="left:0;top:827px;width:1440px;height:33px;background:#f4f4f4"></div>
<span class="t" style="left:5.5px;top:838.00px;font-size:12px;line-height:12px;letter-spacing:-0.445px;">( -9.246, 20.848 )</span>
<div class="a" style="left:99px;top:836px;width:15px;height:15px;background:#fff;border:1px solid #111"></div>
<svg style="left:104px;top:839px" width="6" height="9" viewBox="0 0 6 9"><path d="M0 0v9l6-4.500z" fill="#111"/></svg>
<span class="t" style="left:157.5px;top:838.00px;font-size:12px;line-height:12px;letter-spacing:-0.232px;">Rectangle on Layer 1  (Lens)</span>
<!-- right status icons -->
<svg style="left:986px;top:836px" width="15" height="15" viewBox="0 0 15 15"><defs><linearGradient id="mg" x1="0" y1="0" x2="0" y2="1"><stop offset="0" stop-color="#e27070"/><stop offset=".5" stop-color="#e8e8f2"/><stop offset="1" stop-color="#7aa0e0"/></linearGradient></defs><rect x=".6" y="1.100" width="13.800" height="10.500" fill="url(#mg)" stroke="#55557a" stroke-width="1.200"/><circle cx="7.500" cy="6.400" r="2.800" fill="#fff" stroke="#33334a" stroke-width="1.200"/><path d="M4 13.800h7" stroke="#8a8aa8" stroke-width="1.200"/></svg>
<svg style="left:1014px;top:835px" width="17" height="16" viewBox="0 0 17 16"><path d="M5.500 2.500l7 4.500-2 6-7.500-1-1.500-5z" fill="#fff" stroke="#44445a" stroke-width="1"/><path d="M2 8.500l9 2.200-.8 2.300-7.200-1z" fill="#ee7410"/><path d="M5 .8l3 4" stroke="#44445a" stroke-width="1"/><path d="M14.500 9c1.200 1.800 1.800 2.800 1.800 3.600a1.700 1.700 0 0 1-3.400 0c0-.8.500-1.800 1.600-3.600z" fill="#44445a"/></svg>
<div class="a" style="left:1036px;top:834px;width:18px;height:18px;background:#669933;border:1px solid #8a8a8a"></div>
<span class="t" style="left:1056.5px;top:838.00px;font-size:12px;line-height:12px;letter-spacing:-0.544px;">R:102 G:153 B:51 (#669933)</span>
<div class="sep" style="left:1218px;top:832px;height:22px;background:#d8d8d8"></div>
<svg style="left:1226px;top:835px" width="12" height="17" viewBox="0 0 12 17"><path d="M6 1c2.500 3 4 6 3.500 10h-7C2 7 3.500 4 6 1z" fill="#fff" stroke="#55557a" stroke-width="1"/><path d="M6 4v5" stroke="#55557a"/><circle cx="6" cy="9.500" r="1" fill="#55557a"/><path d="M1.500 12.500h9M1 15h10" stroke="#55557a" stroke-width="1.200"/></svg>
<div class="a" style="left:1245px;top:835px;width:18px;height:17px;background:#000;border:1px solid #555"></div>
<span class="t" style="left:1265.5px;top:838.00px;font-size:12px;line-height:12px;letter-spacing:-0.443px;">R:0 G:0 B:0 (#000000)  0.500 pt</span>
<!-- activate windows watermark -->
<span class="t" style="left:1142.5px;top:777.00px;font-size:20px;line-height:20px;color:#b9b9b9;letter-spacing:-0.023px;">Activate Windows</span>
<span class="t" style="left:1142.5px;top:802.75px;font-size:14.5px;line-height:14.5px;color:#bdbdbd;letter-spacing:0.253px;">Go to Settings to activate Windows.</span>
<!-- ===== taskbar (y 860-900) ===== -->
<div class="a" style="left:0;top:860px;width:1440px;height:40px;background:#0a0c12"></div>
<svg style="left:16px;top:872px" width="16" height="16" viewBox="0 0 16 16"><path d="M0 2.300l6.500-.9v6.100H0zM7.300 1.300L16 0v7.500H7.300zM0 8.300h6.500v6.100L0 13.500zM7.300 8.300H16V16l-8.700-1.200z" fill="#fff"/></svg>
<div class="a" style="left:48px;top:860px;width:344px;height:40px;background:#f2f2f2"></div>
<svg style="left:56px;top:869px" width="22" height="22" viewBox="0 0 22 22"><circle cx="11" cy="11" r="8.600" fill="none" stroke="#111" stroke-width="2.600"/></svg>
<span class="t" style="left:87.5px;top:873.00px;font-size:15px;line-height:15px;color:#3a3a3a;letter-spacing:-0.171px;">Type here to search</span>
<svg style="left:366px;top:871px" width="11" height="18" viewBox="0 0 11 18"><rect x="3" y=".6" width="5" height="10" rx="2.500" fill="none" stroke="#222" stroke-width="1.200"/><path d="M.8 8c0 3.200 2 4.800 4.700 4.800S10.200 11.200 10.200 8M5.500 13v3.500M2.500 16.800h6" fill="none" stroke="#222" stroke-width="1.200"/></svg>
<!-- task view -->
<svg style="left:406px;top:872px" width="18" height="16" viewBox="0 0 18 16"><rect x=".8" y="4" width="11" height="8" fill="none" stroke="#fff" stroke-width="1.400"/><path d="M.8 1.200h11M.8 14.800h11M15.200 3v3.500M15.200 9v4" stroke="#fff" stroke-width="1.500"/><path d="M15.200 .5v1.200M15.200 14.200v1.300" stroke="#fff" stroke-width="1.500"/></svg>
<!-- explorer -->
<svg style="left:456px;top:869px" width="23" height="20" viewBox="0 0 23 20"><path d="M1 3c0-1 .6-1.600 1.600-1.600H8l2 2h10.400c1 0 1.600.6 1.600 1.600v11.500H1z" fill="#f9d36a"/><rect x="1" y="5.500" width="21" height="11.500" fill="#fbe29a"/><path d="M3 17V9.500h17V17z" fill="#43a7e8"/><path d="M7 17v-3.500h9V17z" fill="#fbe29a"/><rect x="1" y="16.500" width="21" height="2" fill="#e8b93c"/></svg>
<div class="a" style="left:447px;top:898px;width:40px;height:2px;background:#76b9ed"></div>
<!-- firefox -->
<svg style="left:503px;top:868px" width="24" height="24" viewBox="0 0 24 24"><defs><radialGradient id="ffg" cx=".6" cy=".25" r=".9"><stop offset="0" stop-color="#ffe226"/><stop offset=".45" stop-color="#ff8a16"/><stop offset="1" stop-color="#e31587"/></radialGradient></defs><circle cx="12" cy="12.500" r="10.500" fill="url(#ffg)"/><circle cx="12.500" cy="13" r="6" fill="#3a2bb0"/><circle cx="11" cy="11.500" r="4" fill="#5d50e6"/><path d="M4 5.500c1-2.500 3-4 5-4.500-.5 1.500 0 3 1.500 4 2 .2 3.500 1 4.500 2.500-2-.5-3.500 0-4.500 1.500-1 2 0 4 2 4.500 2.500.5 4.500-1 5-3.500.8 4.500-2 9-6.500 9.500-5 .5-9-3.500-9-8 0-2 .7-4 2-6z" fill="#ff9a1e"/><path d="M15 1.500c3 1.200 5.500 4 6.300 7.500-1-2-2.500-3-4-3.500.3-1.500-.8-3-2.300-4z" fill="#ffcf2e"/></svg>
<div class="a" style="left:496px;top:898px;width:40px;height:2px;background:#76b9ed"></div>
<!-- word -->
<svg style="left:552px;top:869px" width="24" height="22" viewBox="0 0 24 22"><rect x="9" y="2" width="14" height="18" fill="#fff" stroke="#2a5699" stroke-width="1"/><path d="M12 6h9M12 9h9M12 12h9M12 15h9" stroke="#2a5699" stroke-width="1.400"/><path d="M0 2.500L13.500 0v22L0 19.500z" fill="#2a5699"/><path d="M2.500 7l1.600 8 1.800-6.500h1.300L9 15l1.600-8" fill="none" stroke="#fff" stroke-width="1.500"/></svg>
<!-- coreldraw (active) -->
<div class="a" style="left:590px;top:860px;width:48px;height:40px;background:#34363b"></div>
<svg style="left:601px;top:867px" width="25" height="25" viewBox="0 0 25 25"><rect width="25" height="25" fill="#5bb038"/><path d="M25 0v10L17 0z" fill="#8ad05e"/><path d="M13 0h5l4 25h-6z" fill="#7cc654" opacity=".7"/><path d="M2 1l8 1 11 16.500-1.500 4z" fill="#fff"/><path d="M1 3.500L15.500 23l-6.500 1z" fill="#e8f6dd"/><path d="M6.500 5.500L19 20.500" stroke="#4a9a2c" stroke-width="1"/><path d="M14 22l5-1.500 1.500 3.500-5 1z" fill="#3c8a22"/></svg>
<div class="a" style="left:590px;top:898px;width:48px;height:2px;background:#76b9ed"></div>
<!-- media player -->
<svg style="left:652px;top:871px" width="20" height="19" viewBox="0 0 20 19"><path d="M16 .8L19.800 .3v18L16 18.200z" fill="#5f9ccc"/><path d="M.3 1L16.800 .6v17.600L.3 18.300z" fill="#8cc4e8"/><circle cx="8.300" cy="9.500" r="6.300" fill="#f6851a"/><circle cx="8.300" cy="9.500" r="5.900" fill="none" stroke="#ffb45e" stroke-width=".8"/><path d="M6.200 5.700v7.600l6.400-3.800z" fill="#fff"/></svg>
<!-- photoshop -->
<svg style="left:701px;top:868.500px" width="22" height="20" viewBox="0 0 22 20"><rect x=".7" y=".7" width="20.600" height="18.600" fill="#0b0b56" stroke="#86b2f8" stroke-width="1.400"/><text x="3.600" y="14.200" font-family="Liberation Sans" font-weight="bold" font-size="11.500" fill="#8fbaff">Ps</text></svg>
<!-- photos -->
<svg style="left:750px;top:869px" width="22" height="22" viewBox="0 0 22 22"><rect x=".7" y=".7" width="20.600" height="20.600" fill="#0a0c12" stroke="#fff" stroke-width="1.400"/><path d="M1 21V14l7-9 5 7 1.500-3.300L19.500 14l1.500 0v7z" fill="#fff"/><path d="M13 12l1.500 3" stroke="#0a0c12" stroke-width=".8"/></svg>
<div class="a" style="left:741px;top:898px;width:40px;height:2px;background:#76b9ed"></div>
<!-- tray -->
<svg style="left:1183px;top:871px" width="17" height="17" viewBox="0 0 17 17"><circle cx="11" cy="4.200" r="2.800" fill="none" stroke="#fff" stroke-width="1.300"/><path d="M6.500 12.500c0-3 1.800-4.800 4.500-4.800s4.500 1.800 4.500 4.800" fill="none" stroke="#fff" stroke-width="1.300"/><circle cx="4.500" cy="8.800" r="2.100" fill="none" stroke="#fff" stroke-width="1.300"/><path d="M1 16c0-2.600 1.400-4 3.500-4s3.500 1.400 3.500 4" fill="none" stroke="#fff" stroke-width="1.300"/></svg>
<svg style="left:1220px;top:876px" width="13" height="8" viewBox="0 0 13 8"><path d="M1 7l5.500-5.500L12 7" fill="none" stroke="#fff" stroke-width="1.400"/></svg>
<svg style="left:1242px;top:873px" width="17" height="15" viewBox="0 0 17 15"><rect x="2.600" y="1.600" width="13" height="8.500" fill="none" stroke="#fff" stroke-width="1.200"/><path d="M9 10v3M5.500 13.500h7" stroke="#fff" stroke-width="1.200"/><rect x=".6" y=".6" width="3.500" height="3.500" fill="#0a0c12" stroke="#fff" stroke-width="1"/></svg>
<svg style="left:1266px;top:873px" width="18" height="15" viewBox="0 0 18 15"><path d="M1 5h2.800L7.500 1.500v12L3.800 10H1z" fill="none" stroke="#fff" stroke-width="1.200"/><path d="M10 5c1 1.300 1 3.700 0 5M12.200 3c2 2.500 2 6.500 0 9" fill="none" stroke="#fff" stroke-width="1.100"/><path d="M14.500 1.200c2.700 3.500 2.700 9 0 12.500" fill="none" stroke="#9a9a9a" stroke-width="1"/></svg>
<span class="t" style="left:1292.5px;top:874.00px;font-size:12px;line-height:12px;color:#fff;letter-spacing:-0.758px;">ENG</span>
<span class="t" style="left:1333.5px;top:865.00px;font-size:12px;line-height:12px;color:#fff;letter-spacing:-0.034px;">8:22 PM</span>
<span class="t" style="left:1326.5px;top:882.00px;font-size:12px;line-height:12px;color:#fff;letter-spacing:-0.174px;">10/10/2018</span>
<svg style="left:1399px;top:871px" width="17" height="17" viewBox="0 0 17 17"><path d="M.7 .7h15.600v12H6l-3.300 3.300V12.700H.7z" fill="#fff"/><path d="M3.500 4h10M3.500 6.500h10M3.500 9h7" stroke="#0a0c12" stroke-width="1"/></svg>
<svg style="left:1406px;top:879px" width="17" height="17" viewBox="0 0 17 17"><circle cx="8.500" cy="8.500" r="8" fill="#0a0c12"/><circle cx="8.500" cy="8.500" r="7" fill="#454545"/><text x="5.400" y="12.600" font-family="Liberation Sans" font-weight="bold" font-size="11" fill="#fff">1</text></svg>
<div class="a" style="left:1435px;top:865px;width:1px;height:30px;background:#555"></div>
</body></html>
